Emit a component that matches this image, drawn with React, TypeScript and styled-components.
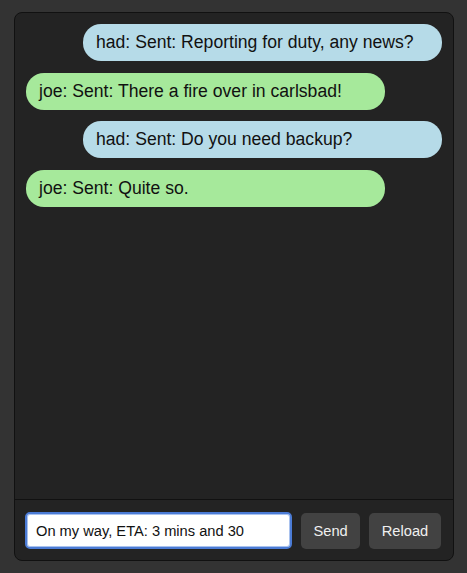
import { useState } from 'react'
import { styled, createGlobalStyle } from 'styled-components'

const GlobalStyle = createGlobalStyle`
    html, body {
        margin: 0;
        padding: 0;
        background: #333333;
        font-family: "Liberation Sans", Arial, sans-serif;
    }
    * { box-sizing: border-box; }
`

const Page = styled.div`
    height: 573px;
    padding: 12px 13px 12px 14px;
`

const Chat = styled.div`
    height: 549px;
    display: flex;
    flex-direction: column;
    background: #232323;
    border: 1px solid #111111;
    border-radius: 8px;
    overflow: hidden;
`

const Messages = styled.div`
    flex: 1;
    display: flex;
    flex-direction: column;
    gap: 11.5px;
    padding: 11px 11px;
    overflow-y: auto;
`

const Bubble = styled.div<{ $mine: boolean }>`
    align-self: ${p => (p.$mine ? 'flex-end' : 'flex-start')};
    width: 359px;
    padding: 8px 13px;
    border-radius: 18px;
    background: ${p => (p.$mine ? '#b6dbe8' : '#a6e99b')};
    color: #111111;
    font-size: 17.6px;
    line-height: 21px;
`

const Footer = styled.form`
    display: flex;
    align-items: center;
    gap: 9px;
    padding: 12px 11px 11px 10px;
    border-top: 1px solid #111111;
`

const Input = styled.input`
    width: 267px;
    height: 37px;
    padding: 0 9px;
    background: #ffffff;
    border: 2px solid #4b7bd5;
    border-radius: 5px;
    box-shadow: inset 0 0 0 1px #a9c2ee;
    color: #111111;
    font-family: inherit;
    font-size: 14.67px;
    outline: none;
`

const Button = styled.button`
    height: 36px;
    padding: 0 12.5px;
    background: #424242;
    color: #f0f0f0;
    border: none;
    border-radius: 5px;
    font-family: inherit;
    font-size: 14.67px;
    cursor: pointer;
`

const messages = [
    { from: 'had', text: 'Sent: Reporting for duty, any news?' },
    { from: 'joe', text: 'Sent: There a fire over in carlsbad!' },
    { from: 'had', text: 'Sent: Do you need backup?' },
    { from: 'joe', text: 'Sent: Quite so.' },
]

export default function App() {
    const [draft, setDraft] = useState('On my way, ETA: 3 mins and 30')

    return (
        <>
            <GlobalStyle />
            <Page>
                <Chat>
                    <Messages>
                        {messages.map((m, i) => (
                            <Bubble key={i} $mine={m.from === 'had'}>
                                {m.from}: {m.text}
                            </Bubble>
                        ))}
                    </Messages>
                    <Footer onSubmit={e => e.preventDefault()}>
                        <Input value={draft} onChange={e => setDraft(e.target.value)} />
                        <Button type="submit">Send</Button>
                        <Button type="button">Reload</Button>
                    </Footer>
                </Chat>
            </Page>
        </>
    )
}
